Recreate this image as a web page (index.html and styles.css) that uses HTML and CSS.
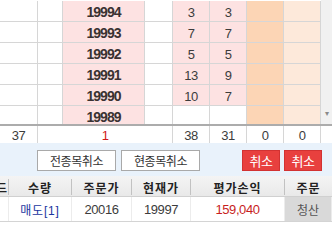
FILE: index.html
```html
<!DOCTYPE html>
<html lang="ko">
<head>
    <meta charset="UTF-8">
    <title>주문 현황</title>
    <link rel="stylesheet" href="styles.css">
</head>
<body>
    <div class="hoga">
        <div class="hoga-grid">
            <div class="hoga-row">
                <div class="cell"></div><div class="cell"></div>
                <div class="cell price">19994</div><div class="cell"></div>
                <div class="cell pink">3</div><div class="cell pink">3</div>
                <div class="cell orange"></div><div class="cell peach"></div>
            </div>
            <div class="hoga-row">
                <div class="cell"></div><div class="cell"></div>
                <div class="cell price">19993</div><div class="cell"></div>
                <div class="cell pink">7</div><div class="cell pink">7</div>
                <div class="cell orange"></div><div class="cell peach"></div>
            </div>
            <div class="hoga-row">
                <div class="cell"></div><div class="cell"></div>
                <div class="cell price">19992</div><div class="cell"></div>
                <div class="cell pink">5</div><div class="cell pink">5</div>
                <div class="cell orange"></div><div class="cell peach"></div>
            </div>
            <div class="hoga-row">
                <div class="cell"></div><div class="cell"></div>
                <div class="cell price">19991</div><div class="cell"></div>
                <div class="cell pink">13</div><div class="cell pink">9</div>
                <div class="cell orange"></div><div class="cell peach"></div>
            </div>
            <div class="hoga-row">
                <div class="cell"></div><div class="cell"></div>
                <div class="cell price">19990</div><div class="cell"></div>
                <div class="cell pink">10</div><div class="cell pink">7</div>
                <div class="cell orange"></div><div class="cell peach"></div>
            </div>
            <div class="hoga-row">
                <div class="cell"></div><div class="cell"></div>
                <div class="cell price">19989</div><div class="cell"></div>
                <div class="cell"></div><div class="cell"></div>
                <div class="cell orange"></div><div class="cell peach"></div>
            </div>
        </div>
        <div class="scrollbar">
            <div class="scroll-down">&#9662;</div>
        </div>
    </div>

    <div class="total-row">
        <div class="cell">37</div>
        <div class="cell total-red">1</div>
        <div class="cell">38</div>
        <div class="cell">31</div>
        <div class="cell">0</div>
        <div class="cell">0</div>
        <div class="cell"></div>
    </div>

    <div class="toolbar">
        <button class="btn">전종목취소</button>
        <button class="btn">현종목취소</button>
        <button class="btn btn-red push">취소</button>
        <button class="btn btn-red">취소</button>
    </div>

    <div class="orders">
        <div class="orders-head">
            <div class="col col-cut"><span>코드</span></div>
            <div class="col">수량</div>
            <div class="col">주문가</div>
            <div class="col">현재가</div>
            <div class="col">평가손익</div>
            <div class="col">주문</div>
        </div>
        <div class="orders-row">
            <div class="col"></div>
            <div class="col blue">매도[1]</div>
            <div class="col num">20016</div>
            <div class="col num">19997</div>
            <div class="col num red">159,040</div>
            <div class="col clear">청산</div>
        </div>
    </div>
</body>
</html>
```

FILE: styles.css
```css
body {
    margin: 0;
    width: 332px;
    height: 244px;
    overflow: hidden;
    background: #ffffff;
    font-family: "Liberation Sans", "Noto Sans CJK KR", sans-serif;
    font-size: 13px;
    letter-spacing: -0.5px;
    color: #3c3c3c;
}

/* 호가 그리드 */
.hoga {
    display: flex;
    height: 124px;
    overflow: hidden;
    border-bottom: 2px solid #acacac;
}
.hoga-grid {
    width: 321px;
    padding-top: 1px;
}
.hoga-row {
    display: grid;
    grid-template-columns: 38px 25px 82px 28px 37px 37px 37px 37px;
    height: 21px;
}
.cell {
    box-sizing: border-box;
    border-right: 1px solid #d6d6d6;
    border-bottom: 1px solid #d6d6d6;
    display: flex;
    align-items: center;
    justify-content: center;
    line-height: 1;
}
.price {
    background: #fde2e2;
    font-weight: bold;
    font-size: 14px;
    letter-spacing: -1px;
    color: #3a3232;
    padding-top: 2px;
}
.pink {
    background: #fde2e2;
    padding-top: 2px;
}
.orange {
    background: #fcd5b5;
}
.peach {
    background: #fde9da;
}
.scrollbar {
    width: 11px;
    background: #f1f1f1;
    display: flex;
    flex-direction: column;
    justify-content: flex-end;
}
.scroll-down {
    height: 16px;
    margin-bottom: 2px;
    font-size: 8px;
    color: #8a8a8a;
    text-align: center;
    line-height: 16px;
}

/* 합계 */
.total-row {
    display: grid;
    grid-template-columns: 38px 135px 37px 37px 37px 37px 11px;
    height: 17px;
}
.total-row .cell {
    border-bottom: none;
    padding-top: 1px;
}
.total-row .cell:last-child {
    border-right: none;
}
.total-row .total-red {
    color: #d01818;
}
.red {
    color: #c81e1e;
}
.blue {
    color: #1a35a0;
}

/* 버튼 줄 */
.toolbar {
    display: flex;
    gap: 5px;
    height: 33px;
    box-sizing: border-box;
    padding: 7px 10px 0 37px;
    background: #e9f2fb;
}
.btn {
    height: 21px;
    width: 79px;
    padding: 0;
    border: 1px solid #a9a9a9;
    background: #ffffff;
    font-family: "Noto Sans CJK KR", sans-serif;
    font-size: 12px;
    letter-spacing: -0.4px;
    color: #333333;
    line-height: 19px;
}
.btn-red {
    width: 38px;
    border-color: #d23232;
    background: #e8403e;
    color: #ffffff;
    font-size: 13px;
}
.push {
    margin-left: auto;
    margin-right: -1px;
}

/* 주문 목록 */
.orders-head,
.orders-row {
    display: grid;
    grid-template-columns: 9px 63px 60px 59px 94px 47px;
}
.orders-head {
    height: 20px;
    background: linear-gradient(#f4f4f4, #e9e9e9);
    border-bottom: 1px solid #d0d0d0;
    font-family: "Noto Sans CJK KR", sans-serif;
    font-size: 12px;
    font-weight: bold;
    letter-spacing: 1px;
    color: #222222;
}
.orders-row {
    height: 24px;
    border-bottom: 1px solid #d4d4d4;
}
.col {
    box-sizing: border-box;
    display: flex;
    align-items: center;
    justify-content: center;
    overflow: hidden;
    white-space: nowrap;
}
.orders-head .col {
    border-right: 1px solid #c2c2c2;
    margin: 3px 0 1px;
}
.orders-head .col:last-child {
    border-right: none;
}
.orders-row .col {
    border-right: 1px solid #ececec;
    font-size: 12px;
    letter-spacing: 0;
}
.orders-row .blue {
    letter-spacing: 0.8px;
}
.orders-row .num {
    font-size: 13px;
    letter-spacing: -0.4px;
}
.col-cut {
    justify-content: flex-end;
}
.clear {
    background: #d9d9d9;
    color: #555555;
}
```
